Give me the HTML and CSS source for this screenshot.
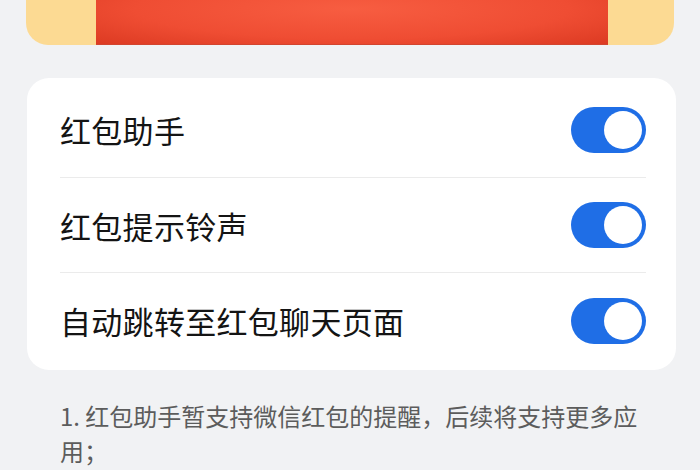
FILE: index.html
```html
<!DOCTYPE html>
<html lang="zh-CN">
<head>
  <meta charset="UTF-8" />
  <meta name="viewport" content="width=device-width, initial-scale=1.0" />
  <title>红包助手</title>
  <link rel="stylesheet" href="styles.css">
</head>
<body>

  <!-- 顶部横幅 -->
  <div class="banner">
    <div class="banner-red"></div>
  </div>

  <div class="card">
    <div class="row">
      <span class="label">红包助手</span>
      <span class="switch on"><span class="knob"></span></span>
    </div>
    <div class="row">
      <span class="label">红包提示铃声</span>
      <span class="switch on"><span class="knob"></span></span>
    </div>
    <div class="row">
      <span class="label">自动跳转至红包聊天页面</span>
      <span class="switch on"><span class="knob"></span></span>
    </div>
  </div>

  <div class="notes">
    <p>1. 红包助手暂支持微信红包的提醒，后续将支持更多应用；</p>
    <p>2. 开启红包提示铃声后，收到红包时将播放提示音。</p>
  </div>

</body>
</html>
```

FILE: styles.css
```css
:root {
  --fundo: #f1f2f4;
  --texto: #141414;
  --cinza: #5c5c5c;
  --azul: #1f6ee6;
  --amarelo: #fcda93;
}

* {
  box-sizing: border-box;
}

body {
  margin: 0;
  padding: 0;
  background-color: var(--fundo);
  font-family: "Noto Sans CJK SC", "Noto Sans", sans-serif;
  color: var(--texto);
  overflow: hidden;
}

.banner {
  height: 45px;
  margin: 0 26px;
  background-color: var(--amarelo);
  border-radius: 0 0 22px 22px;
  display: flex;
  justify-content: center;
}

.banner-red {
  width: 512px;
  margin-left: 4px;
  height: 100%;
  background: radial-gradient(ellipse at 50% 20%, #f75d41 0%, #ef4d33 60%, #dc3a22 100%);
  border-bottom: 1px solid #d2452f;
}

.card {
  background-color: #ffffff;
  margin: 33px 24px 0 27px;
  border-radius: 22px;
  padding: 0 30px 2px 33px;
}

.row {
  height: 95px;
  display: flex;
  align-items: center;
  justify-content: space-between;
  border-bottom: 1px solid #ebebeb;
}

.row:first-child {
  height: 100px;
  padding-top: 4px;
}

.row:last-child {
  border-bottom: none;
}

.label {
  font-size: 31px;
  letter-spacing: 0.3px;
}

.switch {
  width: 75px;
  height: 46px;
  border-radius: 23px;
  background-color: #ccc;
  display: flex;
  align-items: center;
  padding: 0 4px;
}

.switch.on {
  background-color: var(--azul);
  justify-content: flex-end;
}

.knob {
  width: 38px;
  height: 38px;
  border-radius: 50%;
  background-color: #ffffff;
}

.notes {
  margin: 28px 0 0 0;
  padding: 0 50px 0 60px;
  color: var(--cinza);
  font-size: 24px;
  line-height: 35px;
}

.notes p {
  margin: 0;
}
```
